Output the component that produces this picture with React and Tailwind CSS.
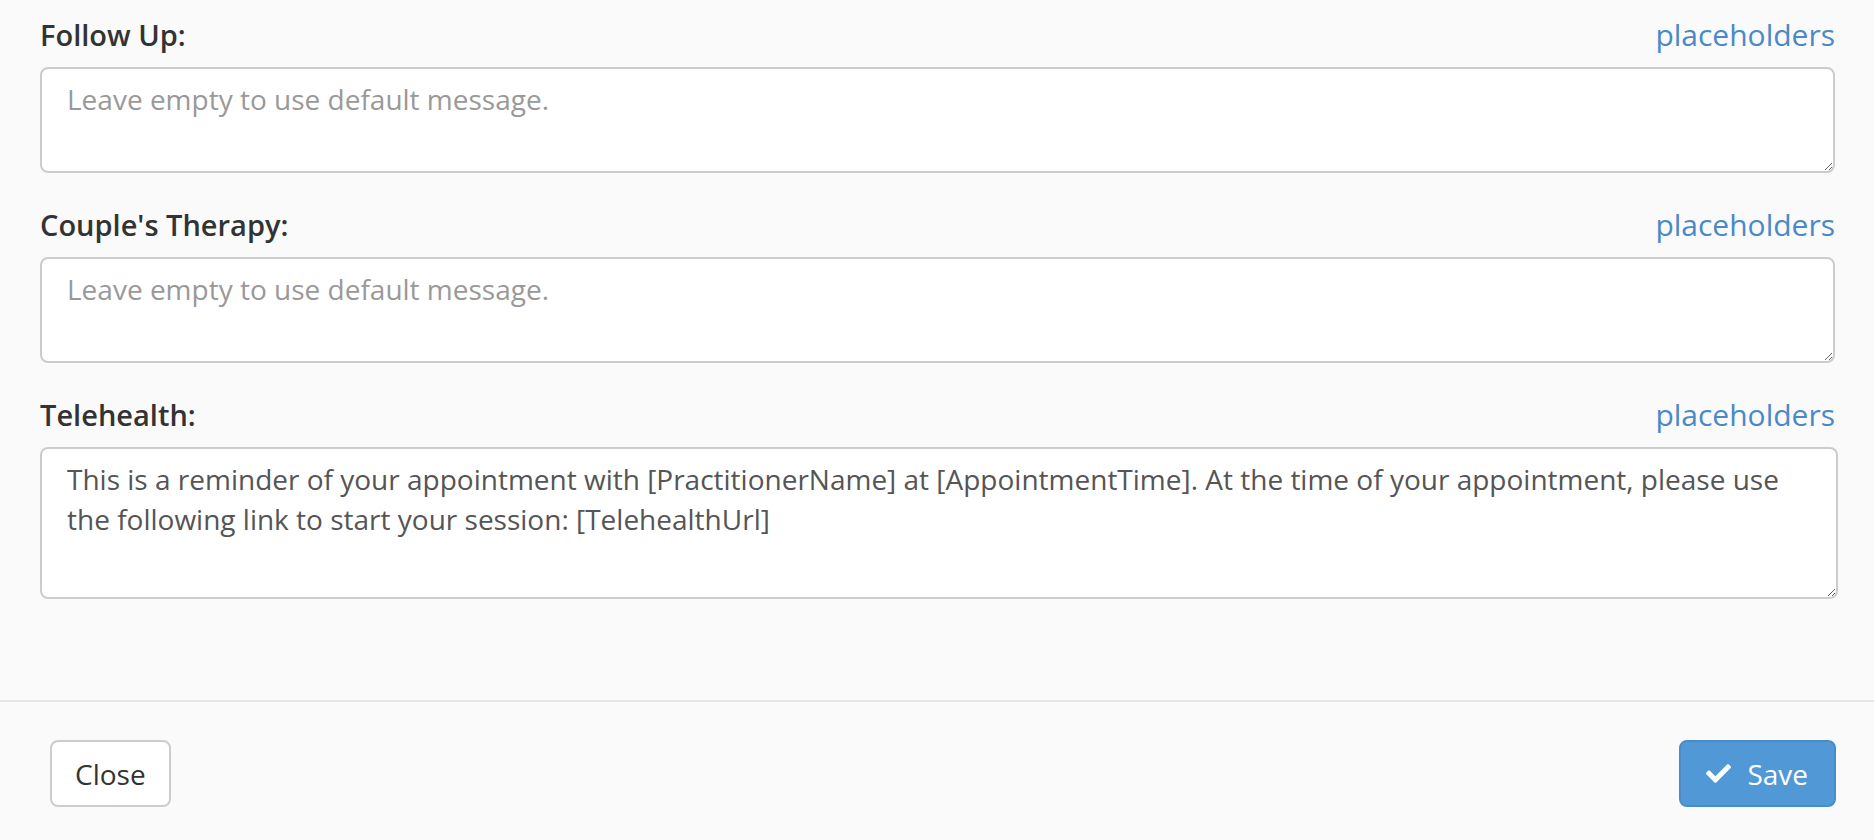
import React from "react";
import { FaCheck } from "react-icons/fa";

function Group({ label, placeholder, value, wide, tall, first }) {
  return (
    <div className={first ? "" : "mt-[32px]"}>
      <div className="flex justify-between items-center h-[40px] leading-[40px]">
        <span className="font-semibold text-[29px] text-[#333333]">{label}</span>
        <a href="#" className="text-[30px] text-[#4a89c8]">placeholders</a>
      </div>
      <textarea
        className={
          "block mt-[12px] bg-white border-2 border-[#cccccc] rounded-[8px] px-[25px] py-[10px] text-[28px] leading-[40px] text-[#555555] placeholder:text-[#999999] outline-none " +
          (wide ? "w-[1798px] " : "w-full ") +
          (tall ? "h-[152px]" : "h-[106px]")
        }
        placeholder={placeholder}
        defaultValue={value}
      />
    </div>
  );
}

export default function App() {
  return (
    <div
      className="w-full h-[840px] bg-[#fafafa] overflow-hidden"
      style={{ fontFamily: '"Open Sans", "Noto Sans", sans-serif' }}
    >
      <div className="pl-[40px] pr-[39px] pt-[15px] pb-[101px]">
        <Group first label="Follow Up:" placeholder="Leave empty to use default message." />
        <Group label="Couple's Therapy:" placeholder="Leave empty to use default message." />
        <Group
          label="Telehealth:"
          wide
          tall
          value="This is a reminder of your appointment with [PractitionerName] at [AppointmentTime]. At the time of your appointment, please use the following link to start your session: [TelehealthUrl]"
        />
      </div>
      <div className="border-t-2 border-[#e5e5e5] flex justify-between items-start pl-[50px] pr-[38px] pt-[38px]">
        <button className="h-[67px] px-[23px] border-2 border-[#cccccc] rounded-[8px] bg-white text-[28px] leading-[40px] text-[#333333]">
          Close
        </button>
        <button className="h-[67px] pl-[25px] pr-[26px] border-2 border-[#4a8cc9] rounded-[8px] bg-[#5199d6] text-[28px] leading-[40px] text-white flex items-center gap-[16px]">
          <FaCheck className="w-[25px] h-[25px]" />
          <span>Save</span>
        </button>
      </div>
    </div>
  );
}
